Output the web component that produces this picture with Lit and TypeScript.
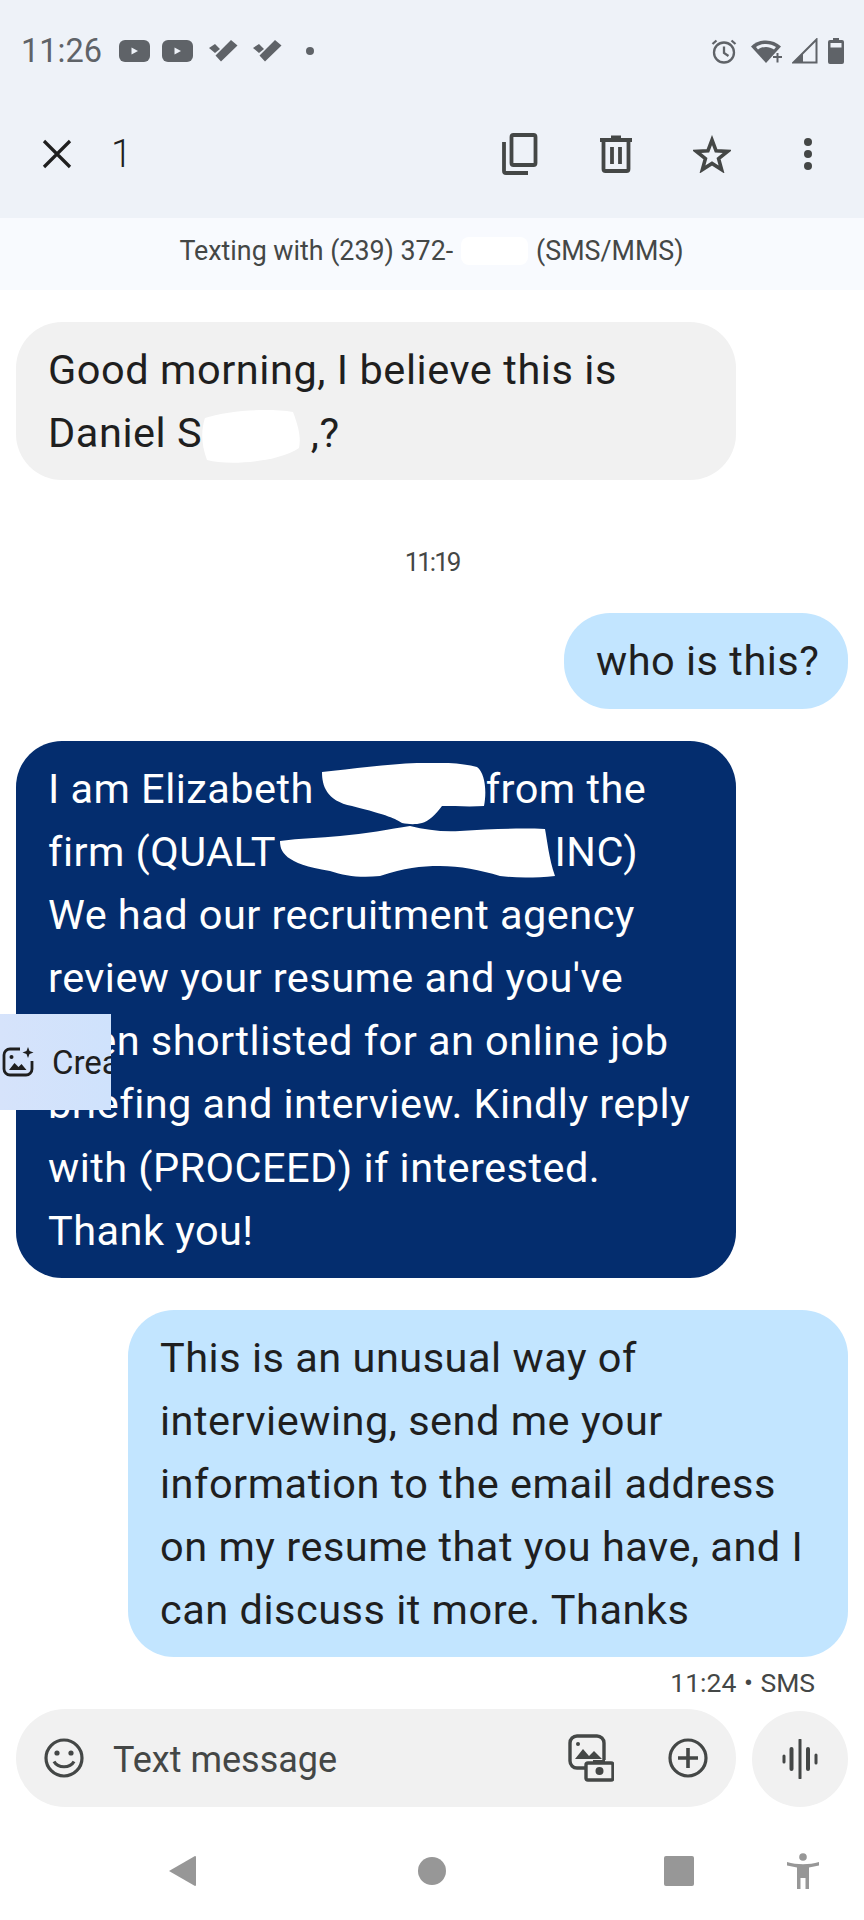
import { LitElement, html, css, svg } from "lit";
import { customElement } from "lit/decorators.js";

const ic = (w: number, h: number, vb: string, body: unknown, cls = "") =>
  html`<svg class=${cls} width=${w} height=${h} viewBox=${vb} xmlns="http://www.w3.org/2000/svg">${body}</svg>`;

const yt = ic(31, 22, "0 0 31 22", svg`<rect width="31" height="22" rx="6" fill="#5f6368"/><path d="M12.500 7.500v7l6.500-3.500z" fill="#eef2f8"/>`);
const chk = ic(29, 22, "0 0 29 22", svg`<path d="M0 8l6-4 5 5-5 4zM12 21.500L6.500 15.500 22 0l6.500 5.500z" fill="#5f6368"/>`);

@customElement("app-root")
export class AppRoot extends LitElement {
  static styles = css`
    :host { display: block; width: 864px; height: 1920px; background: #fff; overflow: hidden; position: relative;
      font-family: Roboto, "Noto Sans", sans-serif; color: #1f1f1f; }
    svg { flex: none; display: block; }
    .top { background: #eef2f8; height: 218px; display: flex; flex-direction: column; }
    .status { height: 102px; padding: 0 20px 0 21px; display: flex; align-items: center; color: #5f6368; }
    .status .time { font-size: 32.500px; width: 98px; }
    .status .yts { display: flex; gap: 12px; }
    .status .chks { display: flex; gap: 15px; margin-left: 16px; }
    .status .dot { width: 8px; height: 8px; border-radius: 50%; background: #5f6368; margin-left: 24px; }
    .status .spacer { flex: 1; }
    .status .r { display: flex; align-items: center; gap: 10px; }
    .status .r .al { margin-right: 3px; }
    .bar { height: 100px; padding-left: 41px; padding-right: 8px; display: flex; align-items: center; margin-top: 2px; }
    .bar .n { font-size: 38px; margin-left: 38px; flex: 1; font-weight: 300; }
    .bar .acts { display: grid; grid-template-columns: repeat(4, 96px); align-items: center; justify-items: center; }
    .info { height: 72px; background: #f8fafe; display: flex; align-items: center; justify-content: center;
      font-size: 26.800px; color: #444746; padding: 0 1px 6px 0; box-sizing: border-box; white-space: pre; }
    .info .gap { display: inline-block; width: 67px; height: 28px; margin: 0 8px; background: #fff; border-radius: 8px; }
    .thread { display: flex; flex-direction: column; padding: 32px 16px 0; position: relative; }
    .b { font-size: 41.500px; letter-spacing: .45px; line-height: 63.100px; padding: 16px 32px; border-radius: 46px; box-sizing: border-box; white-space: pre; position: relative; }
    .in { background: #f1f1f1; width: 720px; align-self: flex-start; height: 158px; font-weight: 380; letter-spacing: .55px; }
    .dark { background: #042d6e; color: #fff; width: 720px; align-self: flex-start; margin-top: 32px; }
    .out { background: #c2e5ff; align-self: flex-end; font-weight: 380; letter-spacing: .5px; }
    .stamp { font-size: 26px; letter-spacing: -2px; color: #444746; text-align: center; margin: 65px 0 0; line-height: 34px; }
    .out.s { margin-top: 34px; width: 284px; height: 96px; }
    .out.l { margin-top: 32px; width: 720px; }
    .meta { font-size: 26.500px; color: #444746; text-align: right; padding-right: 33px; line-height: 34px; margin-top: 9px; word-spacing: 1px; }
    .redact { position: absolute; fill: #fff; }
    .r1 { left: 183px; top: 86px; }
    .r2 { left: 306px; top: 22px; }
    .r3 { left: 264px; top: 85px; }
    .comp { display: flex; gap: 16px; padding: 0 16px; margin-top: 9px; align-items: flex-end; }
    .field { width: 720px; height: 98px; border-radius: 49px; background: #f1f1f1; display: flex; align-items: center; padding: 0 28px; box-sizing: border-box; }
    .field .ph { flex: 1; font-size: 36px; color: #444746; margin-left: 29px; padding-top: 3px; }
    .field .acts { display: flex; align-items: center; gap: 54px; }
    .mic { width: 96px; height: 96px; border-radius: 50%; background: #f1f1f1; display: flex; align-items: center; justify-content: center; }
    .nav { display: flex; align-items: center; height: 62px; margin-top: 33px; padding-left: 168px; }
    .nav .c { width: 28px; height: 28px; border-radius: 50%; background: #979797; margin-left: 222px; }
    .nav .sq { width: 30px; height: 30px; border-radius: 2px; background: #979797; margin-left: 218px; }
    .nav .a { margin-left: 93px; }
    .chip { position: absolute; left: 0; top: 1014px; width: 111px; height: 96px;
      background: linear-gradient(90deg, #d6e3fb, #cfe2fc); display: flex; align-items: center; padding-left: 2px; gap: 18px; box-sizing: border-box; overflow: hidden; font-size: 33px; color: #1f1f1f; white-space: nowrap; }
  `;

  render() {
    return html`
      <div class="top">
        <div class="status">
          <span class="time">11:26</span>
          <div class="yts">${yt}${yt}</div>
          <div class="chks">${chk}${chk}</div>
          <span class="dot"></span>
          <span class="spacer"></span>
          <div class="r">
            ${ic(26, 26, "0 0 26 26", svg`<g fill="none" stroke="#5f6368" stroke-width="2.300"><circle cx="13" cy="14.500" r="10"/><path d="M13 8.500v6.500l4.500 3M1.500 6l4-3.500M24.500 6l-4-3.500"/></g>`, "al")}
            ${ic(32, 26, "0 0 32 26", svg`<path d="M1 8.500C9 .5 23 .5 31 8.500L16 25z" fill="#5f6368"/><path d="M6 9C12 5 20 5 26 9l-2 2.500C19 8 13 8 8 11.500z" fill="#eef2f8"/><path d="M23 19h9M27.500 15v9.500" stroke="#5f6368" stroke-width="2"/>`)}
            ${ic(26, 26, "0 0 26 26", svg`<path d="M1.500 24.500L24.500 1.500v23z" fill="none" stroke="#5f6368" stroke-width="2"/><path d="M1 25l10-10v10z" fill="#5f6368"/>`)}
            ${ic(16, 26, "0 0 16 26", svg`<path d="M5 0h6v2h3a2 2 0 0 1 2 2v20a2 2 0 0 1-2 2H2a2 2 0 0 1-2-2V4a2 2 0 0 1 2-2h3z" fill="#5f6368"/><rect x="2.500" y="5" width="11" height="4.500" fill="#eef2f8"/>`)}
          </div>
        </div>
        <div class="bar">
          ${ic(32, 32, "0 0 32 32", svg`<path d="M3 3l26 26M29 3L3 29" stroke="#1f1f1f" stroke-width="3.200" fill="none"/>`)}
          <span class="n">1</span>
          <div class="acts">
            ${ic(36, 42, "0 0 36 42", svg`<g fill="none" stroke="#444746" stroke-width="3.800"><rect x="9.500" y="2" width="24" height="30" rx="2"/><path d="M2 9v29a2 2 0 0 0 2 2h22"/></g>`)}
            ${ic(34, 38, "0 0 34 38", svg`<g fill="none" stroke="#444746" stroke-width="3.800"><path d="M1 5h32M12 2.500h10M4.500 5v29a2 2 0 0 0 2 2h21a2 2 0 0 0 2-2V5"/><path d="M13 12v17M21 12v17"/></g>`)}
            ${ic(38, 38, "0 0 38 38", svg`<path d="M19 5l4.100 10.800 11.400.600-8.900 7.200 3 11-9.600-6.200-9.600 6.200 3-11-8.900-7.200 11.400-.6z" fill="none" stroke="#444746" stroke-width="3.600"/>`)}
            ${ic(10, 34, "0 0 10 34", svg`<g fill="#444746"><circle cx="5" cy="5" r="4"/><circle cx="5" cy="17" r="4"/><circle cx="5" cy="29" r="4"/></g>`)}
          </div>
        </div>
      </div>
      <div class="info"><span>Texting with (239) 372-</span><span class="gap"></span><span>(SMS/MMS)</span></div>
      <div class="thread">
        <div class="b in">Good morning, I believe this is
Daniel S          ,?${ic(106, 58, "0 0 106 58", svg`<path d="M6 10C30 2 70 0 94 4c6 16 8 26 6 36-20 14-70 18-92 12C2 36 2 22 6 10z"/>`, "redact r1")}</div>
        <div class="stamp">11:19</div>
        <div class="b out s">who is this?</div>
        <div class="b dark">I am Elizabeth                from the
firm (QUALT                          INC)
We had our recruitment agency
review your resume and you've
been shortlisted for an online job
briefing and interview. Kindly reply
with (PROCEED) if interested.
Thank you!${ic(166, 64, "0 0 166 64", svg`<path d="M0 9C30 6 65 1 95 0c25-1 45 0 60 4 8 6 10 24 7 39-14 1-30 0-42 0-6 8-14 16-20 17-8 2-14 1-20 0-6-4-14-8-50-17C4 38 0 22 0 9z"/>`, "redact r2")}${ic(278, 54, "0 0 278 54", svg`<path d="M0 15C20 12 40 12 60 10 85 8 110 3 130 0c16 4 32 6 50 5 30-2 60-3 85-2 2 10 4 30 10 47-20 2-40 2-55 0-20-6-40-10-60-10-20 0-35 2-60 10-20 2-35 0-50-5C4 38 0 25 0 15z"/>`, "redact r3")}</div>
        <div class="b out l">This is an unusual way of
interviewing, send me your
information to the email address
on my resume that you have, and I
can discuss it more. Thanks</div>
        <div class="meta">11:24 • SMS</div>
      </div>
      <div class="comp">
        <div class="field">
          ${ic(40, 40, "0 0 40 40", svg`<g fill="none" stroke="#444746" stroke-width="3.200"><circle cx="20" cy="20" r="18"/><path d="M10 23.500c4 7 16 7 20 0"/></g><circle cx="13" cy="15" r="2.600" fill="#444746"/><circle cx="27" cy="15" r="2.600" fill="#444746"/>`)}
          <span class="ph">Text message</span>
          <div class="acts">
            ${ic(46, 48, "0 0 46 48", svg`<g fill="none" stroke="#444746" stroke-width="3.400"><path d="M18 34H9a7 7 0 0 1-7-7V9a7 7 0 0 1 7-7h20a7 7 0 0 1 7 7v17"/><rect x="18" y="29" width="27" height="17" rx="2"/></g><path d="M7 25l8-10 6 7 5-5 8 8z" fill="#444746"/><circle cx="10" cy="10" r="2" fill="#444746"/><circle cx="31.500" cy="37" r="4" fill="#444746"/><rect x="25" y="26" width="12" height="4" fill="#444746"/>`)}
            ${ic(40, 40, "0 0 40 40", svg`<g fill="none" stroke="#444746" stroke-width="3.200"><circle cx="20" cy="20" r="18"/></g><path d="M20 10v20M10 20h20" stroke="#444746" stroke-width="3.600"/>`)}
          </div>
        </div>
        <div class="mic">
          ${ic(36, 40, "0 0 36 40", svg`<g stroke="#444746" stroke-linecap="round" fill="none"><path d="M2 17v6" stroke-width="3"/><path d="M9.500 10v20" stroke-width="4"/><path d="M18 1v38" stroke-width="3"/><path d="M26 10v20" stroke-width="4"/><path d="M34 16v8" stroke-width="3"/></g>`)}
        </div>
      </div>
      <div class="nav">
        ${ic(28, 32, "0 0 28 32", svg`<path d="M1 16L27 1a1 1 0 0 1 1 1v28a1 1 0 0 1-1 1z" fill="#979797"/>`)}
        <span class="c"></span><span class="sq"></span>
        ${ic(32, 36, "0 0 32 36", svg`<circle cx="16" cy="4" r="3.800" fill="#979797"/><path d="M0 9c10 3 22 3 32 0v3.500l-10 2V36h-3.500V25h-5v11H10V14.500l-10-2z" fill="#979797"/>`, "a")}
      </div>
      <div class="chip">
        ${ic(32, 32, "0 0 32 32", svg`<g fill="none" stroke="#1f1f1f" stroke-width="2.800"><path d="M18 3H8a6 6 0 0 0-6 6v14a6 6 0 0 0 6 6h16a6 6 0 0 0 6-6V15"/></g><path d="M7 24l5.500-7 4 4 3-3 5 6z" fill="#1f1f1f"/><circle cx="9.500" cy="11" r="2" fill="#1f1f1f"/><path d="M26 1l1.500 4 4 1.500-4 1.500-1.500 4-1.500-4-4-1.500 4-1.500z" fill="#1f1f1f"/>`)}
        <span>Create</span>
      </div>
    `;
  }
}
